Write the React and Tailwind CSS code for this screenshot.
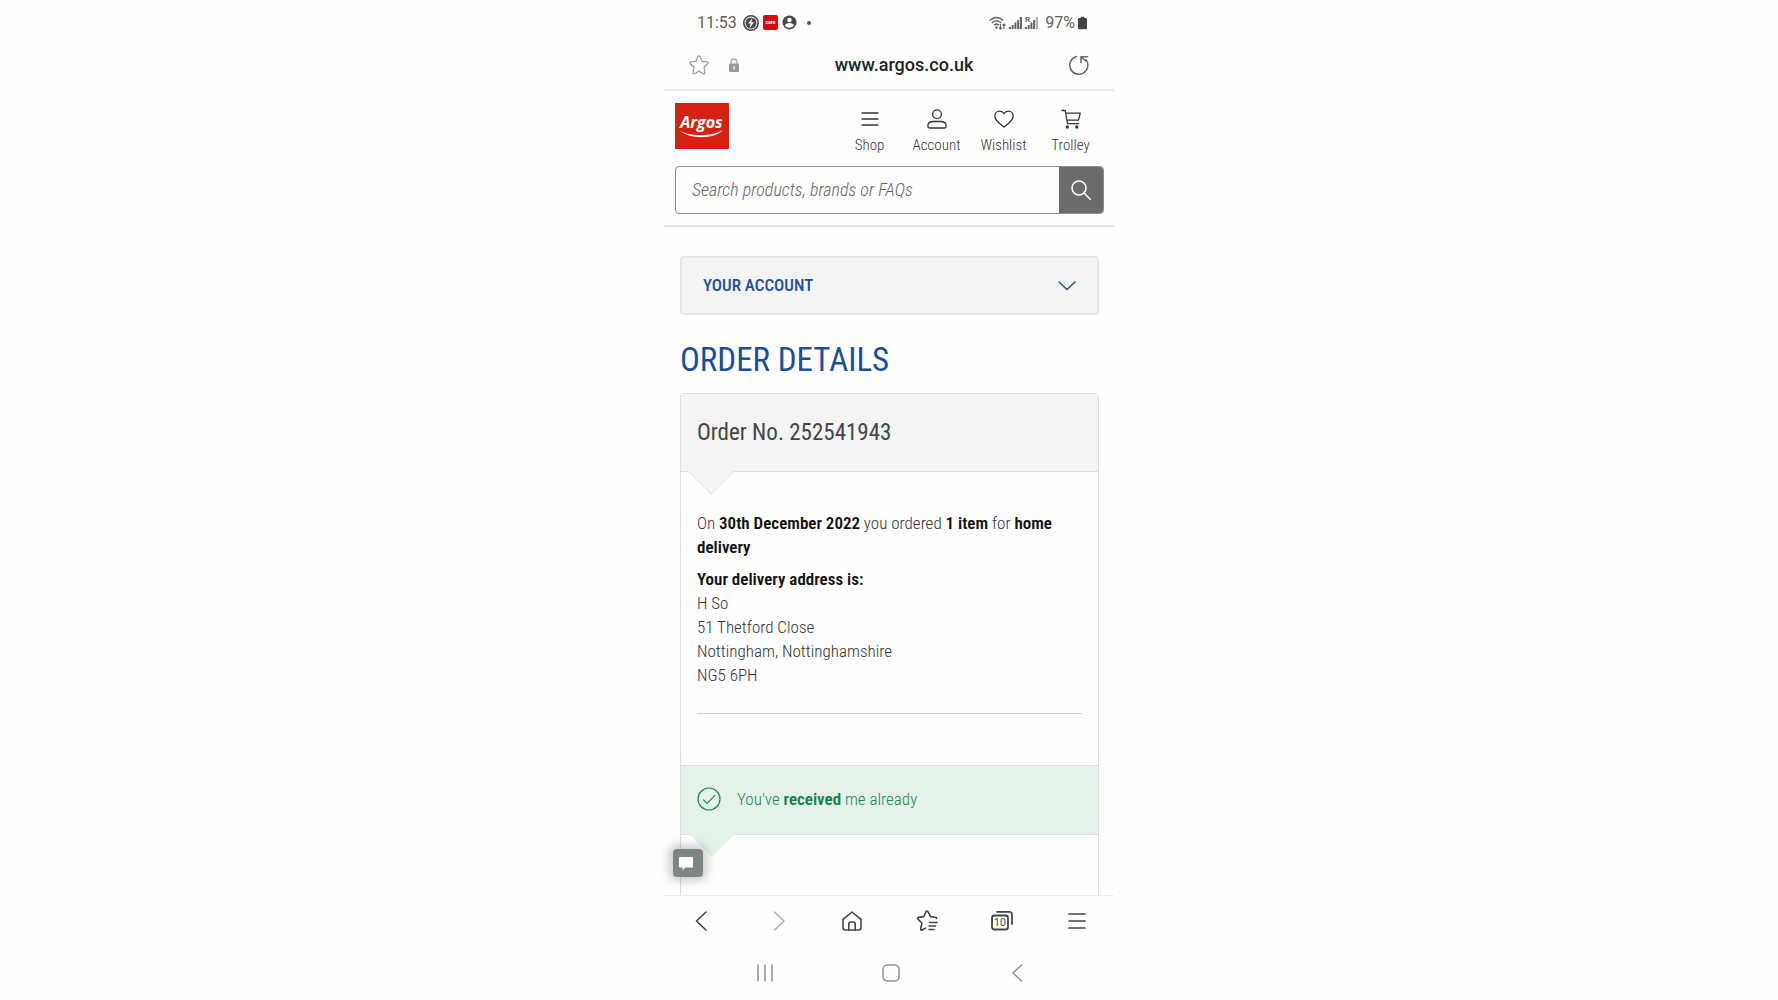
import React from 'react';

const BODY = "font-['Roboto_Condensed',Roboto,sans-serif]";

const Icon = ({ size = 20, box = 20, width = 1.3, children, className = '' }) => (
  <svg
    width={size}
    height={size}
    viewBox={`0 0 ${box} ${box}`}
    fill="none"
    stroke="currentColor"
    strokeWidth={width}
    strokeLinecap="round"
    strokeLinejoin="round"
    className={className}
    aria-hidden="true"
  >
    {children}
  </svg>
);

const navLinks = [
  { label: 'Shop', icon: <Icon><path d="M2 4h16M2 10h16M2 16h16" /></Icon> },
  {
    label: 'Account',
    icon: (
      <Icon>
        <circle cx="10" cy="5.2" r="4.4" />
        <path d="M.8 17.2c0-3.2 2.6-4.7 5.6-4.7h7.2c3 0 5.6 1.5 5.6 4.7 0 1.2-.7 1.8-1.8 1.8H2.6C1.5 19 .8 18.4.8 17.2z" />
      </Icon>
    ),
  },
  {
    label: 'Wishlist',
    icon: (
      <Icon>
        <path d="M10 18C6 15 .8 11.5.8 7.2.8 4.2 3 2.2 5.5 2.2c2 0 3.6 1 4.5 2.5.9-1.5 2.5-2.5 4.5-2.5 2.5 0 4.7 2 4.7 5C19.2 11.5 14 15 10 18z" />
      </Icon>
    ),
  },
  {
    label: 'Trolley',
    icon: (
      <Icon>
        <path d="M.8 1.5h3.4l2.3 13.2h11M4.7 4.2h14.5l-1.7 7H6" />
        <circle cx="6.3" cy="18" r="1" fill="currentColor" />
        <circle cx="15.8" cy="18" r="1" fill="currentColor" />
      </Icon>
    ),
  },
];

const address = ['H So', '51 Thetford Close', 'Nottingham, Nottinghamshire', 'NG5 6PH'];

const toolbar = [
  { label: 'Back', icon: <Icon width={1.6}><path d="M14 1L4.5 10l9.5 9" /></Icon> },
  { label: 'Forward', faded: true, icon: <Icon width={1.4}><path d="M7.5 1L17 10l-9.5 9" /></Icon> },
  {
    label: 'Home',
    icon: (
      <Icon width={1.6}>
        <path d="M1 8.3L10 1l9 7.3v8.2a2.5 2.5 0 01-2.5 2.5h-13A2.5 2.5 0 011 16.5z" />
        <path d="M6.8 19v-6a2 2 0 012-2h2.400a2 2 0 012 2v6" />
      </Icon>
    ),
  },
  {
    label: 'Bookmarks',
    icon: (
      <Icon size={22} box={22} width={1.6}>
        <path d="M20.5 8.5c.2-.8-.4-1.1-1-1.2l-4.9-.7-2.700-5c-.4-.8-1.400-.8-1.800 0l-2.300 5-5.300.8c-.9.1-1.200 1.100-.6 1.700l4 3.900-1.200 6c-.1.9.6 1.400 1.400 1l3.500-1.900" />
        <path d="M13.5 12.5h7.500M13 16h6.500M13 19.500h5" />
      </Icon>
    ),
  },
  {
    label: 'Tabs',
    icon: (
      <Icon size={22} box={22} width={1.8}>
        <rect x="1" y="5.5" width="16" height="14" rx="2.5" />
        <path d="M6 1.8h12.500a2.500 2.500 0 012.500 2.500V14" />
        <text x="9" y="16.3" textAnchor="middle" fontSize="10.5" fill="#444" stroke="none" className="font-[Roboto,sans-serif]">10</text>
      </Icon>
    ),
  },
  { label: 'Menu', icon: <Icon width={1.7}><path d="M2 3h16M2 10h16M2 17h16" /></Icon> },
];

const Signal = ({ roaming }) => (
  <svg width="13" height="13" viewBox="0 0 13 13" fill="#666" aria-hidden="true">
    <path d="M0 11h2v2H0zM2.7 9h2v4h-2zM5.4 6.5h2V13h-2zM8.1 4h2v9h-2z" />
    <path d="M10.8 1H13v12h-2.2z" opacity={roaming ? 0.5 : 1} />
    {roaming && (
      <text x="0" y="6" fontSize="8" fontWeight="700" className="font-[Roboto,sans-serif]">R</text>
    )}
  </svg>
);

const StatusBar = () => (
  <div className="flex h-[45px] items-center justify-between pl-[33px] pr-[27px] font-[Roboto,sans-serif] text-base text-[#5f5f5f]">
    <div className="flex items-center gap-1">
      <span>11:53</span>
      <svg width="16" height="16" viewBox="0 0 16 16" className="ml-0.5" aria-hidden="true">
        <circle cx="8" cy="8" r="7.2" fill="none" stroke="#4a4a4a" strokeWidth="1.6" />
        <circle cx="8" cy="8" r="5.5" fill="#4a4a4a" />
        <path d="M9.5 3L5 8.5h2.7L6.5 13 11 7.3H8.3z" fill="#fff" />
      </svg>
      <svg width="15" height="15" viewBox="0 0 15 15" aria-hidden="true">
        <rect width="15" height="15" rx="2" fill="#dc0510" />
        <text x="7.5" y="9.3" textAnchor="middle" fontSize="5" fontWeight="700" fill="#fff">care</text>
      </svg>
      <svg width="15" height="15" viewBox="0 0 15 15" aria-hidden="true">
        <circle cx="7.5" cy="7.5" r="7" fill="#4a4a4a" />
        <circle cx="7.5" cy="5" r="2.2" fill="#fff" />
        <path d="M3 10.8c0-3.6 9-3.6 9 0-1.8 2.6-7.2 2.6-9 0z" fill="#fff" />
      </svg>
      <span className="ml-1.5 h-1 w-1 rounded-full bg-[#555]" />
    </div>
    <div className="flex items-center gap-[3px]">
      <svg width="17" height="14" viewBox="0 0 17 14" fill="none" stroke="#666" strokeWidth="1.5" aria-hidden="true">
        <path d="M.8 4.5c4-4 9.4-4 13.4 0M2.8 7c3-2.8 6.6-2.8 9.4 0M5 9.3c1.6-1.5 3.4-1.5 5 0" />
        <circle cx="7.5" cy="11.5" r="1.2" fill="#666" stroke="none" />
        <path d="M11.5 8v5m-1.5-1.5l1.500 1.500 1.300-1.500M15 13V8m-1.500 1.500L15 8l1.500 1.500" strokeWidth="1.2" />
      </svg>
      <Signal />
      <Signal roaming />
      <span className="ml-1">97%</span>
      <svg width="9" height="14" viewBox="0 0 10 14" fill="#444" aria-hidden="true">
        <path d="M3 0h4v1.5h1.5A1.5 1.5 0 0110 3v9.5A1.5 1.5 0 018.5 14h-7A1.5 1.5 0 010 12.5V3a1.5 1.5 0 011.5-1.5H3z" />
      </svg>
    </div>
  </div>
);

const AddressBar = () => (
  <div className="flex h-[46px] items-center justify-between border-b-2 border-[#ededed] px-[25px] pb-1 font-[Roboto,sans-serif]">
    <div className="flex items-center gap-5 text-[#999]">
      <button aria-label="Add bookmark">
        <Icon width={1.2}>
          <path d="M10 .8c.5 0 .8.3 1 .8l2.1 4.7 5.1.6c1 .1 1.3 1.1.6 1.800l-3.700 3.600.9 5.200c.2 1-.7 1.700-1.600 1.200L10 16.200l-4.400 2.500c-.9.5-1.800-.2-1.600-1.200l.9-5.200L1.200 8.700C.5 8 .8 7 1.800 6.900l5.100-.6L9 1.600c.2-.5.5-.8 1-.8z" />
        </Icon>
      </button>
      <svg width="10" height="14" viewBox="0 0 10 14" aria-hidden="true">
        <path d="M2.2 7V3.8a2.8 2.8 0 015.6 0V7" fill="none" stroke="#aaa" strokeWidth="1.3" />
        <rect y="5.5" width="10" height="8.5" rx="1.2" fill="#999" />
        <path d="M5 8v3.5" stroke="#fff" strokeWidth="1.2" />
      </svg>
    </div>
    <span className="text-lg font-medium text-[#222]">www.argos.co.uk</span>
    <button aria-label="Reload" className="text-[#666]">
      <Icon width={1.5}>
        <path d="M7.5 1.5a9 9 0 109.500 3.300M12 7.500V1.800h6.500M12.300 2l4.200 3.800" />
      </Icon>
    </button>
  </div>
);

const SiteHeader = () => (
  <header className="border-b-2 border-[#e4e4e4] pb-[11px] pl-[11px] pr-2.5 pt-3">
    <div className="flex h-[63px] items-start justify-between">
      <a href="#" aria-label="Argos home">
        <svg width="54" height="46" viewBox="0 0 54 46">
          <rect width="54" height="46" fill="#d62012" />
          <text x="26.5" y="24.5" textAnchor="middle" fontSize="16" fontWeight="700" fontStyle="italic" fill="#fff" className="font-['Open_Sans',sans-serif]">Argos</text>
          <path d="M5 27.5c9 6 31 6.5 43-.5-9 9.5-34 9.5-43 .5z" fill="#fff" />
        </svg>
      </a>
      <nav className="flex pt-1.5">
        {navLinks.map((link) => (
          <a key={link.label} href="#" className={`flex w-[67px] flex-col items-center gap-1.5 text-[15px] font-light text-[#333] ${BODY}`}>
            {link.icon}
            <span className="leading-5">{link.label}</span>
          </a>
        ))}
      </nav>
    </div>
    <form className="flex h-12 overflow-hidden rounded border border-[#8a8a8a]" onSubmit={(e) => e.preventDefault()}>
      <input
        type="text"
        aria-label="Search products, brands or FAQs"
        placeholder="Search products, brands or FAQs"
        className={`min-w-0 flex-1 px-4 text-lg font-light italic outline-none placeholder:text-[#666] ${BODY}`}
      />
      <button aria-label="Search" className="flex w-11 items-center justify-center bg-[#6b6b6b] text-white">
        <Icon width={1.5}>
          <circle cx="8" cy="8" r="7" />
          <path d="M13 13l6.5 6.5" />
        </Icon>
      </button>
    </form>
  </header>
);

const OrderCard = () => (
  <section className="flex flex-1 flex-col rounded-t border border-b-0 border-[#dedede] text-[17px] font-light leading-6 text-[#333]">
    <div className="relative flex h-[78px] items-center border-b border-[#dedede] bg-[#f4f4f4] px-4">
      <h2 className="text-[23px] font-normal text-[#444]">Order No. 252541943</h2>
      <svg width="46" height="24" viewBox="0 0 46 24" className="absolute left-[7px] top-full" aria-hidden="true">
        <path d="M0 0L23 23 46 0z" fill="#f4f4f4" />
        <path d="M0 0L23 23 46 0" fill="none" stroke="#dedede" />
      </svg>
    </div>
    <div className="px-4 pt-[39px]">
      <p>
        On <strong className="font-semibold text-[#111]">30th December 2022</strong> you ordered{' '}
        <strong className="font-semibold text-[#111]">1 item</strong> for{' '}
        <strong className="font-semibold text-[#111]">home delivery</strong>
      </p>
      <p className="mt-2 font-semibold text-[#111]">Your delivery address is:</p>
      <address className="not-italic">
        {address.map((line) => (
          <div key={line}>{line}</div>
        ))}
      </address>
      <hr className="mb-[51px] mt-[26px] border-[#cfcfcf]" />
    </div>
    <div className="relative flex h-[70px] items-center gap-4 border-y border-[#d3dfd8] bg-[#e4f2ea] px-4 pb-0.5 text-[#1c8553]">
      <Icon size={24} box={24} width={1.2}>
        <circle cx="12" cy="12" r="11" />
        <path d="M6.5 12.8l3.5 3.5 8-8" />
      </Icon>
      <p>You've <strong className="font-semibold text-[#12834b]">received</strong> me already</p>
      <svg width="48" height="24" viewBox="0 0 48 24" className="absolute left-[7px] top-full" aria-hidden="true">
        <path d="M0 -1L24 23 48 -1z" fill="#e4f2ea" />
      </svg>
    </div>
  </section>
);

const ChatButton = () => (
  <button aria-label="Open chat" className="absolute bottom-[18px] left-[9px] flex h-7 w-[30px] items-center justify-center rounded-sm bg-[#7c8784] pr-1 shadow-[0_0_10px_4px_rgba(0,0,0,0.2)]">
    <svg width="14" height="13" viewBox="0 0 14 13" fill="#fff" aria-hidden="true">
      <path d="M1 0h12a1 1 0 011 1v8.5a1 1 0 01-1 1H6.5L3.5 13v-2.5H1a1 1 0 01-1-1V1a1 1 0 011-1z" />
    </svg>
  </button>
);

const App = () => (
  <div className="min-h-screen bg-[#fefefe]">
    <div className="mx-auto flex min-h-screen w-full max-w-[450px] flex-col">
      <StatusBar />
      <AddressBar />
      <SiteHeader />
      <main className={`relative flex flex-1 flex-col pl-4 pr-[15px] pt-[29px] ${BODY}`}>
        <button className="flex h-[59px] items-center justify-between rounded border-2 border-[#e6e6e6] bg-[#f4f4f4] pl-[21px] pr-5 text-[17px] font-medium text-[#1e4f96]">
          YOUR ACCOUNT
          <Icon width={1.5}><path d="M2 6l8 7.5L18 6" /></Icon>
        </button>
        <h1 className="mb-3 mt-6 text-[33px] font-normal leading-[42px] text-[#1c4f95]">ORDER DETAILS</h1>
        <OrderCard />
        <ChatButton />
      </main>
      <footer className="border-t border-[#ededed]">
        <nav className="grid h-[50px] grid-cols-6">
          {toolbar.map((item) => (
            <button key={item.label} aria-label={item.label} className={`flex items-center justify-center ${item.faded ? 'text-[#aaa]' : 'text-[#444]'}`}>
              {item.icon}
            </button>
          ))}
        </nav>
        <div className="grid h-[54px] grid-cols-3 pl-[38px] pr-[34px] text-[#8f8f8f]">
          <button aria-label="Recent apps" className="flex items-center justify-center">
            <Icon width={1.5}><path d="M3 2v16M10 2v16M17 2v16" /></Icon>
          </button>
          <button aria-label="Home screen" className="flex items-center justify-center">
            <Icon width={1.5}><rect x="2" y="2" width="16" height="16" rx="4.5" /></Icon>
          </button>
          <button aria-label="Go back" className="flex items-center justify-center">
            <Icon width={1.5}><path d="M14.5 2L6 10l8.5 8" /></Icon>
          </button>
        </div>
      </footer>
    </div>
  </div>
);

export default App;
